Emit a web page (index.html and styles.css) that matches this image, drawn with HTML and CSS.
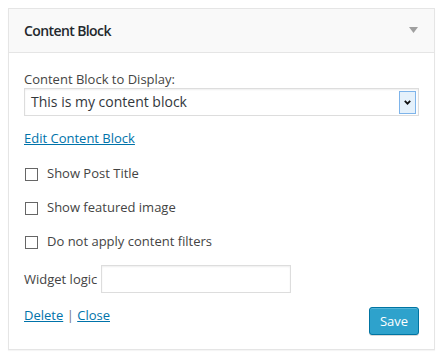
FILE: index.html
```html
<!DOCTYPE html>
<html lang="en">
<head>
<meta charset="utf-8">
<title>Content Block widget</title>
<link rel="stylesheet" href="styles.css">
</head>
<body>
<div class="widget">
  <div class="widget-top">
    <h3 class="widget-title">Content Block</h3>
    <svg class="toggle" width="9" height="6" viewBox="0 0 9 6" aria-hidden="true"><polygon points="0,0 9,0 4.5,6" fill="#a0a0a0"/></svg>
  </div>
  <div class="widget-inside">
    <label class="field-label">Content Block to Display:</label>
    <div class="select">
      <span class="select-value">This is my content block</span>
      <span class="select-btn"><svg width="7" height="5" viewBox="0 0 7 5" aria-hidden="true"><polyline points="0.8,0.8 3.5,3.6 6.2,0.8" fill="none" stroke="#111" stroke-width="1.8"/></svg></span>
    </div>
    <a class="edit-link" href="#">Edit Content Block</a>
    <div class="checks">
      <label class="check"><span class="box"></span><span>Show Post Title</span></label>
      <label class="check"><span class="box"></span><span>Show featured image</span></label>
      <label class="check"><span class="box"></span><span>Do not apply content filters</span></label>
    </div>
    <div class="logic">
      <span>Widget logic</span>
      <span class="text-input"></span>
    </div>
    <div class="footer">
      <div class="links"><a href="#">Delete</a> <span class="sep">|</span> <a href="#">Close</a></div>
      <button class="save" type="button">Save</button>
    </div>
  </div>
</div>
</body>
</html>
```

FILE: styles.css
```css
html, body {
  margin: 0;
  padding: 0;
  background: #fff;
}
body {
  padding: 8px;
  font-family: "Open Sans", "Liberation Sans", sans-serif;
  font-size: 13px;
  color: #444;
}
.widget {
  border: 1px solid #e5e5e5;
  box-shadow: 0 1px 1px rgba(0,0,0,0.04);
  background: #fff;
}
.widget-top {
  height: 43px;
  background: #f9f9f9;
  border-bottom: 1px solid #e5e5e5;
  display: flex;
  align-items: center;
  justify-content: space-between;
  padding: 0 16px 0 15px;
}
.widget-title {
  margin: 0;
  font-size: 14px;
  font-weight: 600;
  letter-spacing: -0.6px;
  color: #23282d;
  line-height: 18px;
  padding-top: 1px;
}
.toggle {
  display: block;
  margin-top: -2px;
}
.widget-inside {
  padding: 17px 15px 14px;
  display: flex;
  flex-direction: column;
  line-height: 18px;
}
.field-label {
  display: block;
}
.select {
  height: 28px;
  box-sizing: border-box;
  border: 1px solid #ddd;
  box-shadow: inset 0 1px 2px rgba(0,0,0,0.07);
  display: flex;
  align-items: center;
  padding: 0 2px 0 6px;
}
.select-value {
  flex: 1;
  font-size: 14px;
  color: #32373c;
  margin-top: -1px;
}
.select-btn {
  width: 17px;
  height: 23px;
  box-sizing: border-box;
  border: 1px solid #7eb4ea;
  background: #e5f1fb;
  display: flex;
  align-items: center;
  justify-content: center;
}
.select-btn svg {
  display: block;
  margin-top: 1px;
}
.edit-link {
  align-self: flex-start;
  margin-top: 13px;
  color: #0073aa;
  text-decoration: underline;
}
.checks {
  margin-top: 17px;
  display: flex;
  flex-direction: column;
  gap: 16px;
}
.check {
  display: flex;
  align-items: flex-start;
  gap: 9px;
}
.box {
  width: 13px;
  height: 13px;
  box-sizing: border-box;
  border: 1px solid #666;
  background: #fff;
  margin: 4px 0 0 1px;
}
.logic {
  margin-top: 15px;
  display: flex;
  align-items: center;
  gap: 4px;
}
.text-input {
  width: 190px;
  height: 28px;
  box-sizing: border-box;
  border: 1px solid #ddd;
  box-shadow: inset 0 1px 2px rgba(0,0,0,0.07);
  background: #fff;
}
.footer {
  margin-top: 14px;
  display: flex;
  justify-content: space-between;
  align-items: flex-start;
}
.links {
  margin-top: -1px;
}
.links a {
  color: #0073aa;
  text-decoration: underline;
}
.sep {
  color: #72777c;
}
.save {
  height: 28px;
  width: 50px;
  padding: 0;
  font-family: inherit;
  font-size: 13px;
  color: #fff;
  background: #2ea2cc;
  border: 1px solid #0074a2;
  border-radius: 3px;
  box-shadow: inset 0 1px 0 rgba(120,200,230,0.5), 0 1px 0 rgba(0,0,0,0.15);
  line-height: 26px;
}
```
